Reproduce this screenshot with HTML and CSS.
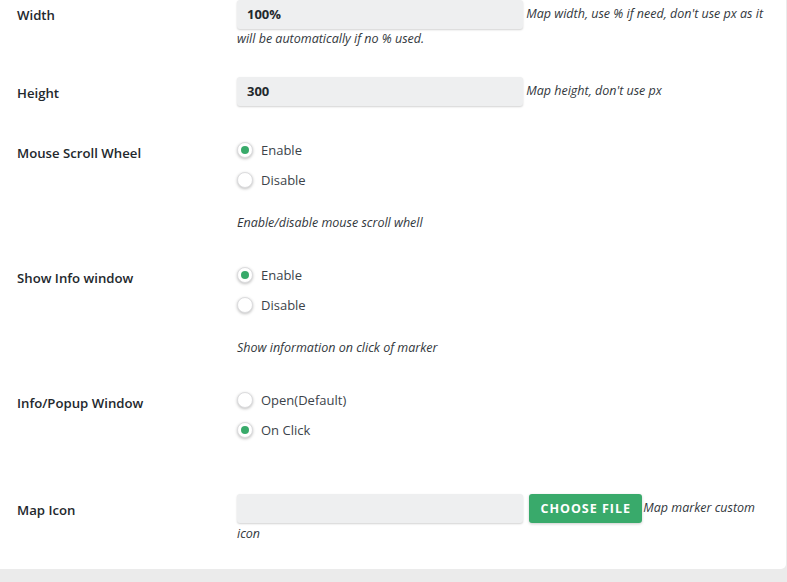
FILE: index.html
```html
<!DOCTYPE html>
<html>
<head>
<meta charset="utf-8">
<link rel="stylesheet" href="styles.css">
</head>
<body>
<div class="card">
  <div class="row row-width">
    <div class="label">Width</div>
    <div class="field">
      <span class="input"><span class="val">100%</span></span> <span class="desc">Map width, use % if need, don't use px as it will be automatically if no % used.</span>
    </div>
  </div>

  <div class="row row-height">
    <div class="label">Height</div>
    <div class="field">
      <span class="input"><span class="val">300</span></span> <span class="desc">Map height, don't use px</span>
    </div>
  </div>

  <div class="row row-radio">
    <div class="label label-radio">Mouse Scroll Wheel</div>
    <div class="field">
      <div class="radio"><span class="dot checked"></span>Enable</div>
      <div class="radio"><span class="dot"></span>Disable</div>
      <p class="desc note">Enable/disable mouse scroll whell</p>
    </div>
  </div>

  <div class="row row-radio">
    <div class="label label-radio">Show Info window</div>
    <div class="field">
      <div class="radio"><span class="dot checked"></span>Enable</div>
      <div class="radio"><span class="dot"></span>Disable</div>
      <p class="desc note">Show information on click of marker</p>
    </div>
  </div>

  <div class="row row-popup">
    <div class="label label-radio">Info/Popup Window</div>
    <div class="field">
      <div class="radio"><span class="dot"></span>Open(Default)</div>
      <div class="radio"><span class="dot checked"></span>On Click</div>
    </div>
  </div>

  <div class="row row-icon">
    <div class="label">Map Icon</div>
    <div class="field">
      <span class="input"></span> <span class="btn">Choose File</span><span class="desc">Map marker custom icon</span>
    </div>
  </div>
</div>
</body>
</html>
```

FILE: styles.css
```css
html, body {
  margin: 0;
  padding: 0;
}
body {
  background: #ebebeb;
  font-family: "Open Sans", "Noto Sans", sans-serif;
  color: #32373c;
  width: 787px;
  height: 582px;
  overflow: hidden;
}
.card {
  background: #ffffff;
  height: 569px;
  margin-right: 1px;
  border-bottom-right-radius: 5px;
}
.row {
  display: grid;
  grid-template-columns: 237px 1fr;
}
.label {
  padding-left: 17px;
  padding-top: 5px;
  font-size: 13.2px;
  line-height: 20px;
  font-weight: 600;
  color: #23282d;
}
.label-radio {
  padding-top: 8px;
}
.field {
  font-size: 12.5px;
  line-height: 20px;
  padding-right: 8px;
}
.input {
  display: inline-block;
  vertical-align: middle;
  box-sizing: border-box;
  width: 286px;
  height: 29px;
  background: #eeeff0;
  border-radius: 3px;
  box-shadow: 0 1px 2px rgba(0, 0, 0, 0.18);
  padding: 0 10px;
  line-height: 29px;
}
.val {
  font-size: 13px;
  font-weight: 700;
  color: #23282d;
}
.desc {
  font-style: italic;
  font-size: 12.5px;
  color: #32373c;
}
.note {
  margin: 18px 0 0;
  line-height: 20px;
}
.row-height {
  margin-top: 28px;
}
.row-height .label {
  padding-top: 6px;
}
.row-radio {
  margin-top: 29px;
}
.row-radio + .row-radio {
  margin-top: 27px;
}
.row-popup {
  margin-top: 27px;
}
.row-icon {
  margin-top: 49px;
}
.row-icon .label {
  padding-top: 6px;
}
.row-icon .field {
  line-height: 21px;
}
.radio {
  display: flex;
  align-items: center;
  height: 30px;
  font-size: 13px;
  color: #3c434a;
}
.dot {
  box-sizing: border-box;
  width: 16px;
  height: 16px;
  border-radius: 50%;
  background: #fff;
  border: 1px solid #dcdcde;
  box-shadow: 0 1px 3px rgba(0, 0, 0, 0.25);
  margin-right: 8px;
  display: flex;
  align-items: center;
  justify-content: center;
}
.dot.checked::after {
  content: "";
  width: 8px;
  height: 8px;
  border-radius: 50%;
  background: #38aa6a;
}
.btn {
  display: inline-block;
  vertical-align: middle;
  box-sizing: border-box;
  width: 113px;
  height: 29px;
  line-height: 29px;
  margin-left: 3px;
  margin-right: 1px;
  background: #39aa6b;
  color: #ffffff;
  border-radius: 3px;
  box-shadow: 0 1px 3px rgba(0, 0, 0, 0.2);
  text-transform: uppercase;
  font-size: 12.5px;
  font-weight: 700;
  letter-spacing: 1px;
  text-align: center;
}
```
